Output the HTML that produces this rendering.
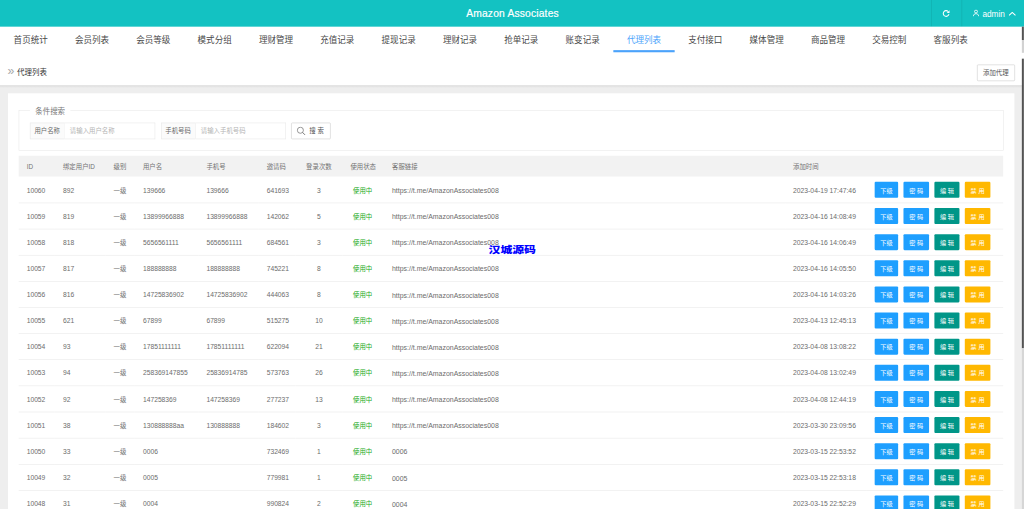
<!DOCTYPE html>
<html lang="zh-CN"><head><meta charset="utf-8"><title>Amazon Associates</title>
<style>
html,body{margin:0;padding:0}
body{width:1024px;height:509px;overflow:hidden;background:#eee;font-family:"Liberation Sans","Noto Sans CJK SC",sans-serif;}
#root{position:absolute;left:0;top:0;width:1920px;height:955px;transform:scale(0.533333);transform-origin:0 0;overflow:hidden;background:#eee;color:#666;font-size:12px}
.hdr{position:absolute;left:0;top:0;width:1920px;height:50.5px;background:#13c2c2;color:#fff}
.title{position:absolute;left:0;width:1920px;left:1px;top:1.4px;line-height:50px;text-align:center;font-size:19.2px;letter-spacing:0.37px;-webkit-text-stroke:0.35px #fff}
.hr1,.hr2{position:absolute;top:0;width:1px;height:50px;background:rgba(0,0,0,.12)}
.hr1{left:1746px}.hr2{left:1803px}
.ic-ref{position:absolute;left:1766.2px;top:16.9px;width:16px;height:16px}
.ic-user{position:absolute;left:1824px;top:18.2px;width:12px;height:13px}
.admin{position:absolute;left:1842px;top:0.6px;line-height:49px;font-size:15.5px}
.ic-caret{position:absolute;left:1891px;top:21.6px;width:14px;height:8px}
.nav{position:absolute;left:0;top:50px;width:1920px;height:52px;background:#fff;white-space:nowrap;font-size:0}
.ni{display:inline-block;width:115px;height:50px;line-height:51.5px;text-align:center;font-size:16px;color:#484848;box-sizing:border-box;position:relative;font-weight:400}
.ni.on{color:#4ba3fb}
.ni.on:after{content:'';position:absolute;left:0;top:43.5px;width:115px;height:4px;background:#4ba3fb}
.crumb{position:absolute;left:0;top:100px;width:1920px;height:60px;background:#fff}
.raq{position:absolute;left:14px;top:0;line-height:66px;font-size:23px;color:#a8a8a8}
.ct{position:absolute;left:32px;top:0;line-height:70px;font-size:14px;color:#333}
.addbtn{position:absolute;left:1832px;top:21px;width:70.5px;height:30.5px;box-sizing:border-box;border:1px solid #c9c9c9;border-radius:2px;line-height:28px;text-align:center;font-size:12px;color:#555;background:#fff}
.shadow{position:absolute;left:0;top:160px;width:1920px;height:5px;background:linear-gradient(#dcdcdc,#eee)}
.card{position:absolute;left:15px;top:175px;width:1887px;height:900px;background:#fff}
.fs{position:absolute;left:20px;top:32px;width:1847px;height:76px;box-sizing:border-box;border:1px solid #e6e6e6}
.lg{position:absolute;left:20px;top:-11px;padding:0 10px;background:#fff;font-size:14px;line-height:22px;color:#787878}
.lab{position:absolute;top:21.5px;width:65px;height:31px;box-sizing:border-box;border:1px solid #e6e6e6;background:#fbfbfb;line-height:29px;text-align:center;font-size:12px;color:#686868}
.inp{position:absolute;top:21.5px;height:31px;box-sizing:border-box;border:1px solid #e6e6e6;border-left:none;line-height:29px;padding-left:10px;font-size:12px;color:#b4b4b4;background:#fff}
.sbtn{position:absolute;left:510px;top:21.5px;width:74px;height:31px;box-sizing:border-box;border:1px solid #c9c9c9;border-radius:2px;background:#fff;color:#555;font-size:12px;line-height:28px}
.sbtn svg{position:absolute;left:9px;top:6px;width:17.5px;height:17.5px}
.sbtn b{position:absolute;left:33px;top:0.5px;font-weight:normal}
.tb{position:absolute;left:20px;top:116.5px;width:1846px;border-collapse:collapse;table-layout:fixed;font-size:12px;color:#6c6c6c}
.tb th{height:40px;font-size:12px;text-align:left;font-weight:normal;padding:0 15px;white-space:nowrap}
.tb td{height:48px;font-size:12.6px;border-bottom:1px solid #e6e6e6;padding:2px 15px 0;box-sizing:border-box;height:49px;white-space:nowrap;overflow:hidden}
.tb .c{text-align:center}
.thbg{position:absolute;left:20px;top:116.6px;width:1846px;height:39.9px;background:#f2f2f2}
.tb .g .z{color:#22aa22;left:-1px}
.tb .z{font-size:12px;position:relative;top:-1.5px;color:#727272}
.tb .u{font-size:13px}
.tb .d{font-size:12.7px}
.b{display:inline-block;font-style:normal;height:30px;line-height:31px;width:48px;text-align:center;color:#fff;border-radius:2px;margin-right:10px;font-size:11.6px;vertical-align:middle}
.b1{background:#1e9fff;width:44px;margin-left:1px}.b2{background:#1e9fff}.b3{background:#009688;width:47px}.b4{background:#ffb800}
.wm{position:absolute;left:916px;top:453.8px;font-size:18px;font-weight:900;color:#0000ff;line-height:30px;transform:scaleX(1.235);transform-origin:0 0;white-space:nowrap}
.sb1{position:absolute;left:1916.3px;top:50px;width:4px;height:25px;background:linear-gradient(90deg,#444,#777)}
.sb2{position:absolute;left:1916.3px;top:75px;width:4px;height:24px;background:#d2d2d2}
.sb3{position:absolute;left:1916.3px;top:109.5px;width:4px;height:543.5px;background:linear-gradient(90deg,#444,#777)}
.sb4{position:absolute;left:1916.3px;top:653px;width:4px;height:304px;background:#d6d6d6}

.tb th{color:#737373}
.tb td.ops{padding-top:0;padding-bottom:0}
.tb th{padding-top:0}

</style></head><body>
<div id="root">
<div class="hdr"><div class="title">Amazon Associates</div>
<div class="hr1"></div><div class="hr2"></div>
<svg class="ic-ref" viewBox="0 0 16 16"><path d="M13.3 9.6 A5.4 5.4 0 1 1 11.6 4.2" fill="none" stroke="#fff" stroke-width="2"/><path d="M14.3 2.1 L14.3 7.4 L9 7.4 Z" fill="#fff"/></svg>
<svg class="ic-user" viewBox="0 0 12 13"><circle cx="6" cy="3.6" r="2.75" fill="none" stroke="#fff" stroke-width="1.6"/><path d="M0.9 12.8 C1.2 8.8 3.6 7.7 6 7.7 C8.4 7.7 10.8 8.8 11.1 12.8" fill="none" stroke="#fff" stroke-width="1.6"/></svg>
<div class="admin">admin</div>
<svg class="ic-caret" viewBox="0 0 14 8"><path d="M1 7 L7 1.2 L13 7" fill="none" stroke="#fff" stroke-width="2"/></svg>
</div>
<div class="nav"><span class="ni">首页统计</span><span class="ni">会员列表</span><span class="ni">会员等级</span><span class="ni">模式分组</span><span class="ni">理财管理</span><span class="ni">充值记录</span><span class="ni">提现记录</span><span class="ni">理财记录</span><span class="ni">抢单记录</span><span class="ni">账变记录</span><span class="ni on">代理列表</span><span class="ni">支付接口</span><span class="ni">媒体管理</span><span class="ni">商品管理</span><span class="ni">交易控制</span><span class="ni">客服列表</span></div>
<div class="crumb"><span class="raq">»</span><span class="ct">代理列表</span><span class="addbtn">添加代理</span></div>
<div class="shadow"></div>
<div class="card">
<div class="fs"><span class="lg">条件搜索</span>
<span class="lab" style="left:20px">用户名称</span><span class="inp" style="left:85px;width:170px">请输入用户名称</span>
<span class="lab" style="left:265.5px">手机号码</span><span class="inp" style="left:330.5px;width:169.5px">请输入手机号码</span>
<span class="sbtn"><svg viewBox="0 0 16 16"><circle cx="6.6" cy="6.6" r="5.2" fill="none" stroke="#777" stroke-width="1.3"/><path d="M10.4 10.4 L14.6 14.6" stroke="#666" stroke-width="1.5"/></svg><b>搜 索</b></span>
</div>
<div class="thbg"></div>
<table class="tb"><colgroup><col style="width:68px"><col style="width:95px"><col style="width:55px"><col style="width:119px"><col style="width:113px"><col style="width:69px"><col style="width:88px"><col style="width:78px"><col style="width:752px"><col style="width:152px"><col></colgroup>
<thead><tr><th>ID</th><th>绑定用户ID</th><th>级别</th><th>用户名</th><th>手机号</th><th>邀请码</th><th class="c">登录次数</th><th class="c">使用状态</th><th>客服链接</th><th>添加时间</th><th></th></tr></thead>
<tbody>
<tr><td>10060</td><td>892</td><td><span class="z">一级</span></td><td>139666</td><td>139666</td><td>641693</td><td class="c">3</td><td class="c g"><span class="z">使用中</span></td><td class="u">https://t.me/AmazonAssociates008</td><td class="d">2023-04-19 17:47:46</td><td class="ops"><i class="b b1">下级</i><i class="b b2">密 码</i><i class="b b3">编 辑</i><i class="b b4">禁 用</i></td></tr>
<tr><td>10059</td><td>819</td><td><span class="z">一级</span></td><td>13899966888</td><td>13899966888</td><td>142062</td><td class="c">5</td><td class="c g"><span class="z">使用中</span></td><td class="u">https://t.me/AmazonAssociates008</td><td class="d">2023-04-16 14:08:49</td><td class="ops"><i class="b b1">下级</i><i class="b b2">密 码</i><i class="b b3">编 辑</i><i class="b b4">禁 用</i></td></tr>
<tr><td>10058</td><td>818</td><td><span class="z">一级</span></td><td>5656561111</td><td>5656561111</td><td>684561</td><td class="c">3</td><td class="c g"><span class="z">使用中</span></td><td class="u">https://t.me/AmazonAssociates008</td><td class="d">2023-04-16 14:06:49</td><td class="ops"><i class="b b1">下级</i><i class="b b2">密 码</i><i class="b b3">编 辑</i><i class="b b4">禁 用</i></td></tr>
<tr><td>10057</td><td>817</td><td><span class="z">一级</span></td><td>188888888</td><td>188888888</td><td>745221</td><td class="c">8</td><td class="c g"><span class="z">使用中</span></td><td class="u">https://t.me/AmazonAssociates008</td><td class="d">2023-04-16 14:05:50</td><td class="ops"><i class="b b1">下级</i><i class="b b2">密 码</i><i class="b b3">编 辑</i><i class="b b4">禁 用</i></td></tr>
<tr><td>10056</td><td>816</td><td><span class="z">一级</span></td><td>14725836902</td><td>14725836902</td><td>444063</td><td class="c">8</td><td class="c g"><span class="z">使用中</span></td><td class="u">https://t.me/AmazonAssociates008</td><td class="d">2023-04-16 14:03:26</td><td class="ops"><i class="b b1">下级</i><i class="b b2">密 码</i><i class="b b3">编 辑</i><i class="b b4">禁 用</i></td></tr>
<tr><td>10055</td><td>621</td><td><span class="z">一级</span></td><td>67899</td><td>67899</td><td>515275</td><td class="c">10</td><td class="c g"><span class="z">使用中</span></td><td class="u">https://t.me/AmazonAssociates008</td><td class="d">2023-04-13 12:45:13</td><td class="ops"><i class="b b1">下级</i><i class="b b2">密 码</i><i class="b b3">编 辑</i><i class="b b4">禁 用</i></td></tr>
<tr><td>10054</td><td>93</td><td><span class="z">一级</span></td><td>17851111111</td><td>17851111111</td><td>622094</td><td class="c">21</td><td class="c g"><span class="z">使用中</span></td><td class="u">https://t.me/AmazonAssociates008</td><td class="d">2023-04-08 13:08:22</td><td class="ops"><i class="b b1">下级</i><i class="b b2">密 码</i><i class="b b3">编 辑</i><i class="b b4">禁 用</i></td></tr>
<tr><td>10053</td><td>94</td><td><span class="z">一级</span></td><td>258369147855</td><td>25836914785</td><td>573763</td><td class="c">26</td><td class="c g"><span class="z">使用中</span></td><td class="u">https://t.me/AmazonAssociates008</td><td class="d">2023-04-08 13:02:49</td><td class="ops"><i class="b b1">下级</i><i class="b b2">密 码</i><i class="b b3">编 辑</i><i class="b b4">禁 用</i></td></tr>
<tr><td>10052</td><td>92</td><td><span class="z">一级</span></td><td>147258369</td><td>147258369</td><td>277237</td><td class="c">13</td><td class="c g"><span class="z">使用中</span></td><td class="u">https://t.me/AmazonAssociates008</td><td class="d">2023-04-08 12:44:19</td><td class="ops"><i class="b b1">下级</i><i class="b b2">密 码</i><i class="b b3">编 辑</i><i class="b b4">禁 用</i></td></tr>
<tr><td>10051</td><td>38</td><td><span class="z">一级</span></td><td>130888888aa</td><td>130888888</td><td>184602</td><td class="c">3</td><td class="c g"><span class="z">使用中</span></td><td class="u">https://t.me/AmazonAssociates008</td><td class="d">2023-03-30 23:09:56</td><td class="ops"><i class="b b1">下级</i><i class="b b2">密 码</i><i class="b b3">编 辑</i><i class="b b4">禁 用</i></td></tr>
<tr><td>10050</td><td>33</td><td><span class="z">一级</span></td><td>0006</td><td></td><td>732469</td><td class="c">1</td><td class="c g"><span class="z">使用中</span></td><td class="u">0006</td><td class="d">2023-03-15 22:53:52</td><td class="ops"><i class="b b1">下级</i><i class="b b2">密 码</i><i class="b b3">编 辑</i><i class="b b4">禁 用</i></td></tr>
<tr><td>10049</td><td>32</td><td><span class="z">一级</span></td><td>0005</td><td></td><td>779981</td><td class="c">1</td><td class="c g"><span class="z">使用中</span></td><td class="u">0005</td><td class="d">2023-03-15 22:53:18</td><td class="ops"><i class="b b1">下级</i><i class="b b2">密 码</i><i class="b b3">编 辑</i><i class="b b4">禁 用</i></td></tr>
<tr><td>10048</td><td>31</td><td><span class="z">一级</span></td><td>0004</td><td></td><td>990824</td><td class="c">2</td><td class="c g"><span class="z">使用中</span></td><td class="u">0004</td><td class="d">2023-03-15 22:52:29</td><td class="ops"><i class="b b1">下级</i><i class="b b2">密 码</i><i class="b b3">编 辑</i><i class="b b4">禁 用</i></td></tr>
<tr><td>10047</td><td>30</td><td><span class="z">一级</span></td><td>0003</td><td></td><td>381244</td><td class="c">1</td><td class="c g"><span class="z">使用中</span></td><td class="u">0003</td><td class="d">2023-03-15 22:52:01</td><td class="ops"><i class="b b1">下级</i><i class="b b2">密 码</i><i class="b b3">编 辑</i><i class="b b4">禁 用</i></td></tr>
</tbody></table>
</div>
<div class="wm">汉城源码</div>
<div class="sb1"></div><div class="sb2"></div><div class="sb3"></div><div class="sb4"></div>
</div>
</body></html>
